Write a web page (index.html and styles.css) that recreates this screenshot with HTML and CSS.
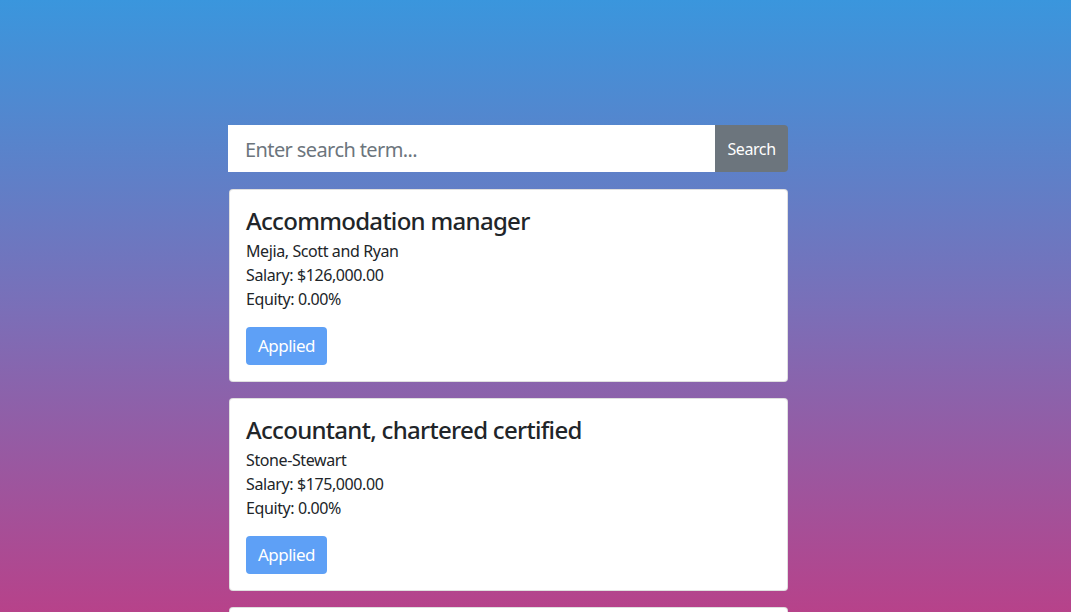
FILE: index.html
```html
<!DOCTYPE html>
<html lang="en">
<head>
<meta charset="utf-8">
<title>Jobs</title>
<link rel="stylesheet" href="styles.css">
</head>
<body>
<main class="page">
  <div class="column">
    <form class="search">
      <input class="search-input" type="text" placeholder="Enter search term...">
      <button class="search-btn" type="button">Search</button>
    </form>
    <div class="card">
      <h4 class="card-title">Accommodation manager</h4>
      <p class="card-text">Mejia, Scott and Ryan</p>
      <p class="card-text">Salary: $126,000.00</p>
      <p class="card-text">Equity: 0.00%</p>
      <button class="btn-applied" type="button" disabled>Applied</button>
    </div>
    <div class="card">
      <h4 class="card-title">Accountant, chartered certified</h4>
      <p class="card-text">Stone-Stewart</p>
      <p class="card-text">Salary: $175,000.00</p>
      <p class="card-text">Equity: 0.00%</p>
      <button class="btn-applied" type="button" disabled>Applied</button>
    </div>
    <div class="card card-partial"></div>
  </div>
</main>
</body>
</html>
```

FILE: styles.css
```css
* { box-sizing: border-box; }
html, body { margin: 0; padding: 0; height: 100%; overflow: hidden; }
body {
  font-family: "Noto Sans", "Open Sans", sans-serif;
  color: #212529;
  font-size: 16px;
  line-height: 1.5;
  background: linear-gradient(180deg, #3a96dd 0px, #7a6fb8 306px, #b7428a 612px);
  background-attachment: fixed;
}
.page {
  padding-top: 125px;
  padding-left: 228px;
}
.column {
  width: 560px;
  display: flex;
  flex-direction: column;
  gap: 16px;
}
.search {
  display: flex;
  margin: 0 0 1px 0;
  height: 47px;
}
.search-input {
  flex: 1;
  border: 0;
  border-radius: 0;
  padding: 1px 17px 0;
  font-family: inherit;
  font-size: 20px;
  letter-spacing: -0.6px;
  color: #495057;
  background: #fff;
  outline: none;
}
.search-input::placeholder { color: #6c757d; }
.search-btn {
  width: 73px;
  border: 0;
  border-radius: 0 4px 4px 0;
  background: #6c757d;
  color: #fff;
  font-family: inherit;
  font-size: 16px;
  letter-spacing: -0.4px;
  padding: 0;
}
.card {
  margin-left: 1px;
  background: #fff;
  border: 1px solid rgba(0,0,0,.125);
  border-radius: 4px;
  padding: 16px;
  display: flex;
  flex-direction: column;
  align-items: flex-start;
}
.card-partial { height: 193px; }
.card-title {
  margin: 0 0 3px;
  padding-top: 1px;
  font-size: 24px;
  font-weight: 500;
  line-height: 1.2;
  letter-spacing: -0.7px;
}
.card-text { margin: 0; letter-spacing: -0.4px; }
.btn-applied {
  margin-top: 16px;
  height: 38px;
  width: 81px;
  padding: 0;
  border: 0;
  border-radius: 4px;
  background: #5ea0f6;
  color: #fff;
  font-family: inherit;
  font-size: 17px;
  letter-spacing: -0.5px;
}
```
